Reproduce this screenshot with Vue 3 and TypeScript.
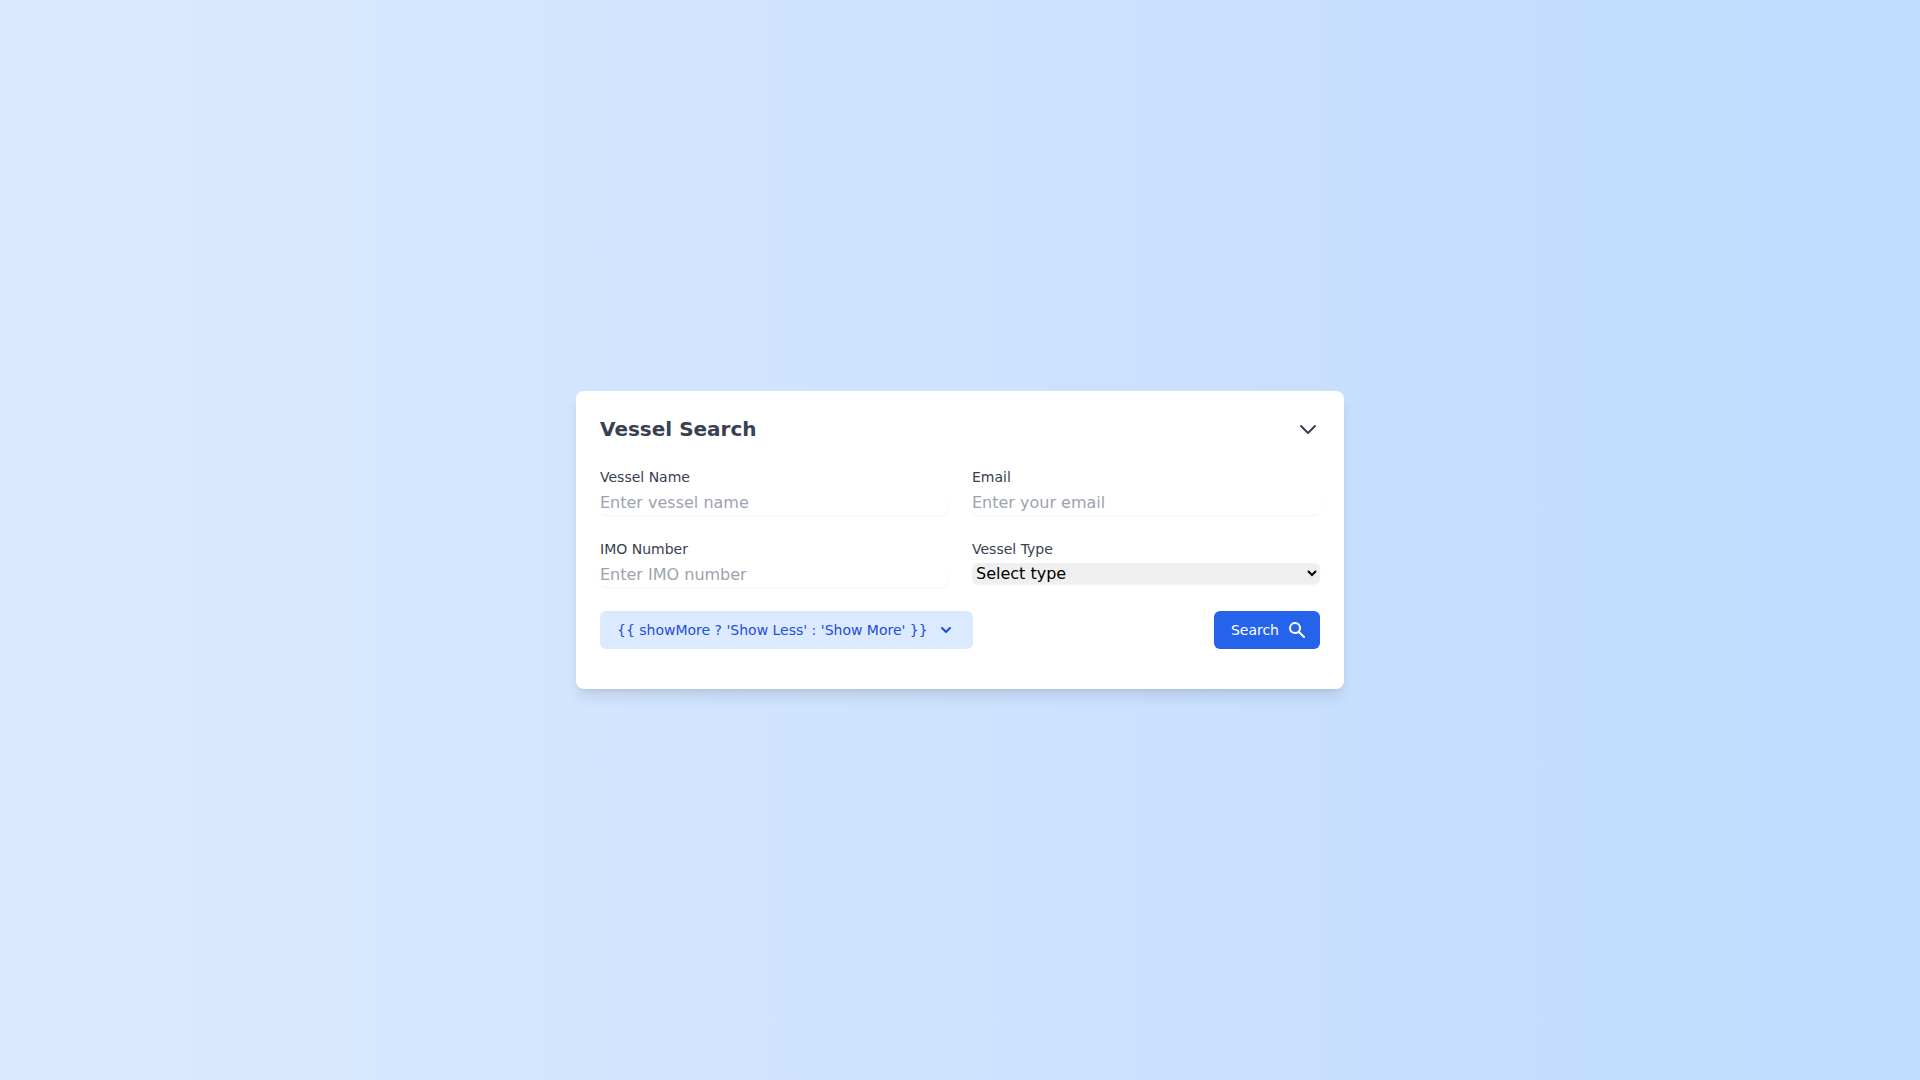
<script setup lang="ts">
import { ref } from 'vue'

const toggleLabel = "{{ showMore ? 'Show Less' : 'Show More' }}"
const vesselName = ref('')
const email = ref('')
const imoNumber = ref('')
const vesselType = ref('')
</script>

<template>
  <main class="page">
    <form class="card" @submit.prevent>
      <header class="card-header">
        <h2>Vessel Search</h2>
        <button type="button" class="collapse" aria-label="Collapse">
          <svg width="24" height="24" viewBox="0 0 24 24" fill="none" stroke="currentColor" stroke-width="2" stroke-linecap="round" stroke-linejoin="round"><path d="M19 9l-7 7-7-7" /></svg>
        </button>
      </header>
      <div class="fields">
        <div class="field">
          <label for="vessel-name">Vessel Name</label>
          <input id="vessel-name" v-model="vesselName" type="text" placeholder="Enter vessel name" />
        </div>
        <div class="field">
          <label for="email">Email</label>
          <input id="email" v-model="email" type="email" placeholder="Enter your email" />
        </div>
        <div class="field">
          <label for="imo">IMO Number</label>
          <input id="imo" v-model="imoNumber" type="text" placeholder="Enter IMO number" />
        </div>
        <div class="field">
          <label for="vessel-type">Vessel Type</label>
          <select id="vessel-type" v-model="vesselType">
            <option value="">Select type</option>
            <option value="cargo">Cargo</option>
            <option value="tanker">Tanker</option>
          </select>
        </div>
      </div>
      <div class="actions">
        <button type="button" class="btn toggle">
          {{ toggleLabel }}
          <svg width="20" height="20" viewBox="0 0 20 20" fill="currentColor"><path fill-rule="evenodd" clip-rule="evenodd" d="M5.293 7.293a1 1 0 011.414 0L10 10.586l3.293-3.293a1 1 0 111.414 1.414l-4 4a1 1 0 01-1.414 0l-4-4a1 1 0 010-1.414z" /></svg>
        </button>
        <button type="submit" class="btn search">
          Search
          <svg width="20" height="20" viewBox="0 0 20 20" fill="currentColor"><path fill-rule="evenodd" clip-rule="evenodd" d="M8 4a4 4 0 100 8 4 4 0 000-8zM2 8a6 6 0 1110.89 3.476l4.817 4.817a1 1 0 01-1.414 1.414l-4.816-4.816A6 6 0 012 8z" /></svg>
        </button>
      </div>
    </form>
  </main>
</template>

<style>
body {
  margin: 0;
}
</style>

<style scoped>
.page,
.page * {
  box-sizing: border-box;
}
.page {
  min-height: 100vh;
  display: flex;
  align-items: center;
  justify-content: center;
  background: linear-gradient(to right, #dbeafe, #bfdbfe);
  font-family: "DejaVu Sans", sans-serif;
  font-size: 16px;
  line-height: 24px;
}
.card {
  width: 100%;
  max-width: 768px;
  padding: 24px 24px 40px;
  background: #fff;
  border-radius: 8px;
  box-shadow: 0 10px 15px -3px rgba(0, 0, 0, 0.1), 0 4px 6px -4px rgba(0, 0, 0, 0.1);
}
.card-header {
  display: flex;
  align-items: center;
  justify-content: space-between;
  margin-bottom: 24px;
}
h2 {
  margin: 0;
  font-size: 20px;
  line-height: 28px;
  font-weight: 700;
  color: #374151;
}
button {
  border: 0;
  font: inherit;
  cursor: pointer;
}
svg {
  display: block;
}
.collapse {
  padding: 0;
  background: none;
  color: #374151;
}
.fields {
  display: grid;
  grid-template-columns: 1fr 1fr;
  gap: 24px;
}
.field {
  display: flex;
  flex-direction: column;
}
label {
  font-size: 14px;
  line-height: 20px;
  color: #374151;
}
input,
select {
  width: 100%;
  margin: 4px 0 0;
  padding: 0;
  border: 0;
  border-radius: 6px;
  box-shadow: 0 1px 2px rgba(0, 0, 0, 0.05);
  font: inherit;
}
input {
  background: #fff;
  color: #111827;
}
input::placeholder {
  color: #9ca3af;
}
select {
  background-color: #efefef;
  color: #000;
}
.actions {
  display: flex;
  justify-content: space-between;
  margin-top: 24px;
}
.btn {
  display: flex;
  align-items: center;
  gap: 8px;
  padding: 8px 16px;
  border: 1px solid transparent;
  border-radius: 6px;
  font-size: 14px;
  line-height: 20px;
}
.toggle {
  background-color: #dbeafe;
  color: #1d4ed8;
}
.search {
  padding-right: 12px;
  background-color: #2563eb;
  color: #fff;
}
</style>
